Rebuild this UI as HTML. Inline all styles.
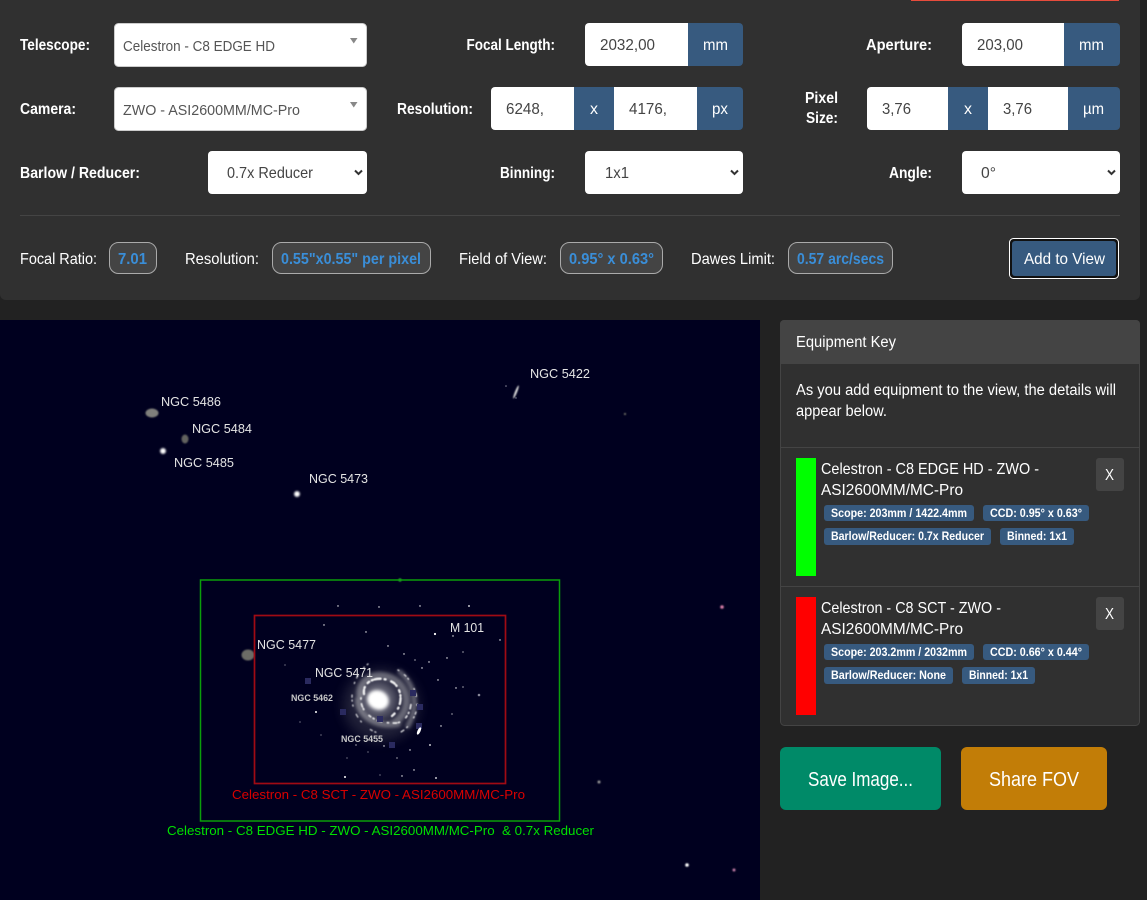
<!DOCTYPE html>
<html><head><meta charset="utf-8"><title>FOV Calculator</title>
<style>
html,body{margin:0;padding:0;background:#222;width:1147px;height:900px;overflow:hidden}
svg{display:block}
text{font-family:"Liberation Sans",Arial,sans-serif;white-space:pre}
.l{font-size:16px;font-weight:bold;fill:#fff}
.n{font-size:15.5px;fill:#fff}
.d{font-size:16px;fill:#555}
.b{font-size:16px;font-weight:bold;fill:#3a8ed8}
.t{font-size:16px;fill:#fff}
.s{font-size:12px;font-weight:bold;fill:#fff}
.g{font-size:13px;fill:#e4e4e4}
</style></head><body>
<svg width="1147" height="900" viewBox="0 0 1147 900" xmlns="http://www.w3.org/2000/svg">
<defs>
<filter id="b1" x="-30%" y="-30%" width="160%" height="160%"><feGaussianBlur stdDeviation="0.3"/></filter>
<filter id="b2" x="-50%" y="-50%" width="200%" height="200%"><feGaussianBlur stdDeviation="1.6"/></filter>
<filter id="b3" x="-50%" y="-50%" width="200%" height="200%"><feGaussianBlur stdDeviation="6"/></filter>
<filter id="b4" x="-50%" y="-50%" width="200%" height="200%"><feGaussianBlur stdDeviation="0.8"/></filter>
<filter id="b5" x="-20%" y="-20%" width="140%" height="140%"><feGaussianBlur stdDeviation="0.5"/></filter>
<radialGradient id="st"><stop offset="0" stop-color="#fff"/><stop offset=".4" stop-color="#fff"/><stop offset="1" stop-color="#fff" stop-opacity="0"/></radialGradient>
</defs>
<rect width="1147" height="900" fill="#222"/>
<!-- top panel -->
<path d="M0 0H1140V294a6 6 0 0 1-6 6H6a6 6 0 0 1-6-6Z" fill="#303030"/>
<rect x="911" y="0" width="208" height="1" fill="#e74c3c"/>
<!-- row 1 -->
<text class="l" x="20" y="50" textLength="70" lengthAdjust="spacingAndGlyphs">Telescope:</text>
<rect x="114.500" y="23.500" width="252" height="43" rx="4" fill="#fff" stroke="#ccc"/>
<text class="d" x="123" y="51" textLength="152" lengthAdjust="spacingAndGlyphs" style="font-size:14.500px">Celestron - C8 EDGE HD</text>
<path d="M350 38h7.500l-3.750 5.500z" fill="#888"/>
<text class="l" x="466.500" y="50" textLength="88.500" lengthAdjust="spacingAndGlyphs">Focal Length:</text>
<path d="M589 23H688V66H589a4 4 0 0 1-4-4V27a4 4 0 0 1 4-4Z" fill="#fff"/>
<path d="M688 23H739a4 4 0 0 1 4 4V62a4 4 0 0 1-4 4H688Z" fill="#375a7f"/>
<text class="d" x="600" y="50" textLength="55" lengthAdjust="spacingAndGlyphs" style="fill:#444">2032,00</text>
<text class="n" x="703" y="50" textLength="25" lengthAdjust="spacingAndGlyphs">mm</text>
<text class="l" x="866" y="50" textLength="66" lengthAdjust="spacingAndGlyphs">Aperture:</text>
<path d="M966 23H1064V66H966a4 4 0 0 1-4-4V27a4 4 0 0 1 4-4Z" fill="#fff"/>
<path d="M1064 23H1116a4 4 0 0 1 4 4V62a4 4 0 0 1-4 4H1064Z" fill="#375a7f"/>
<text class="d" x="977" y="50" textLength="46" lengthAdjust="spacingAndGlyphs" style="fill:#444">203,00</text>
<text class="n" x="1079" y="50" textLength="25" lengthAdjust="spacingAndGlyphs">mm</text>
<!-- row 2 -->
<text class="l" x="20" y="114" textLength="56" lengthAdjust="spacingAndGlyphs">Camera:</text>
<rect x="114.500" y="87.500" width="252" height="43" rx="4" fill="#fff" stroke="#ccc"/>
<text class="d" x="123" y="115" textLength="177" lengthAdjust="spacingAndGlyphs" style="font-size:14.500px">ZWO - ASI2600MM/MC-Pro</text>
<path d="M350 102h7.500l-3.750 5.500z" fill="#888"/>
<text class="l" x="397" y="114" textLength="76" lengthAdjust="spacingAndGlyphs">Resolution:</text>
<path d="M495 87H574V130H495a4 4 0 0 1-4-4V91a4 4 0 0 1 4-4Z" fill="#fff"/>
<rect x="574" y="87" width="40" height="43" fill="#375a7f"/>
<rect x="614" y="87" width="83" height="43" fill="#fff"/>
<path d="M697 87H739a4 4 0 0 1 4 4V126a4 4 0 0 1-4 4H697Z" fill="#375a7f"/>
<text class="d" x="506" y="114" textLength="38" lengthAdjust="spacingAndGlyphs" style="fill:#444">6248,</text>
<text class="n" x="590" y="114" textLength="8" lengthAdjust="spacingAndGlyphs">x</text>
<text class="d" x="629" y="114" textLength="38" lengthAdjust="spacingAndGlyphs" style="fill:#444">4176,</text>
<text class="n" x="712" y="114" textLength="16" lengthAdjust="spacingAndGlyphs">px</text>
<text class="l" x="805" y="103" textLength="33" lengthAdjust="spacingAndGlyphs">Pixel</text>
<text class="l" x="806" y="123" textLength="32" lengthAdjust="spacingAndGlyphs">Size:</text>
<path d="M871 87H948V130H871a4 4 0 0 1-4-4V91a4 4 0 0 1 4-4Z" fill="#fff"/>
<rect x="948" y="87" width="40" height="43" fill="#375a7f"/>
<rect x="988" y="87" width="80" height="43" fill="#fff"/>
<path d="M1068 87H1116a4 4 0 0 1 4 4V126a4 4 0 0 1-4 4H1068Z" fill="#375a7f"/>
<text class="d" x="882" y="114" textLength="29" lengthAdjust="spacingAndGlyphs" style="fill:#444">3,76</text>
<text class="n" x="964" y="114" textLength="8" lengthAdjust="spacingAndGlyphs">x</text>
<text class="d" x="1003" y="114" textLength="29" lengthAdjust="spacingAndGlyphs" style="fill:#444">3,76</text>
<text class="n" x="1083" y="114" textLength="21" lengthAdjust="spacingAndGlyphs">µm</text>
<!-- row 3 -->
<text class="l" x="20" y="178" textLength="120" lengthAdjust="spacingAndGlyphs">Barlow / Reducer:</text>
<rect x="208" y="151" width="159" height="43" rx="4" fill="#fff"/>
<text class="d" x="227" y="178" textLength="86" lengthAdjust="spacingAndGlyphs" style="fill:#444">0.7x Reducer</text>
<path d="M355 170.500l3.500 3.500 3.500-3.500" fill="none" stroke="#333" stroke-width="2"/>
<text class="l" x="500" y="178" textLength="55" lengthAdjust="spacingAndGlyphs">Binning:</text>
<rect x="585" y="151" width="158" height="43" rx="4" fill="#fff"/>
<text class="d" x="605" y="178" textLength="24" lengthAdjust="spacingAndGlyphs" style="fill:#444">1x1</text>
<path d="M731 170.500l3.500 3.500 3.500-3.500" fill="none" stroke="#333" stroke-width="2"/>
<text class="l" x="889" y="178" textLength="43" lengthAdjust="spacingAndGlyphs">Angle:</text>
<rect x="962" y="151" width="158" height="43" rx="4" fill="#fff"/>
<text class="d" x="981" y="178" textLength="15" lengthAdjust="spacingAndGlyphs" style="fill:#444">0°</text>
<path d="M1108 170.500l3.500 3.500 3.500-3.500" fill="none" stroke="#333" stroke-width="2"/>
<rect x="20" y="215" width="1100" height="1" fill="#444"/>
<!-- stats -->
<text class="t" x="20" y="264" textLength="77" lengthAdjust="spacingAndGlyphs">Focal Ratio:</text>
<rect x="109.500" y="242.500" width="47" height="31" rx="9" fill="#444" stroke="#aaa"/>
<text class="b" x="118" y="264" textLength="29" lengthAdjust="spacingAndGlyphs">7.01</text>
<text class="t" x="185" y="264" textLength="74" lengthAdjust="spacingAndGlyphs">Resolution:</text>
<rect x="272.500" y="242.500" width="158" height="31" rx="9" fill="#444" stroke="#aaa"/>
<text class="b" x="281" y="264" textLength="140" lengthAdjust="spacingAndGlyphs">0.55"x0.55" per pixel</text>
<text class="t" x="459" y="264" textLength="88" lengthAdjust="spacingAndGlyphs">Field of View:</text>
<rect x="560.500" y="242.500" width="102" height="31" rx="9" fill="#444" stroke="#aaa"/>
<text class="b" x="569" y="264" textLength="85" lengthAdjust="spacingAndGlyphs">0.95° x 0.63°</text>
<text class="t" x="691" y="264" textLength="84" lengthAdjust="spacingAndGlyphs">Dawes Limit:</text>
<rect x="788.500" y="242.500" width="104" height="31" rx="9" fill="#444" stroke="#aaa"/>
<text class="b" x="797" y="264" textLength="87" lengthAdjust="spacingAndGlyphs">0.57 arc/secs</text>
<rect x="1009.500" y="238.500" width="109" height="40" rx="4" fill="#111" stroke="#fff"/>
<rect x="1012" y="241" width="104" height="35" rx="3" fill="#375a7f"/>
<text class="t" x="1024" y="264" textLength="81" lengthAdjust="spacingAndGlyphs">Add to View</text>
<!-- sky -->
<rect x="0" y="320" width="760" height="580" fill="#00001f"/>
<g fill="#fff">
<g filter="url(#b4)">
<ellipse cx="152" cy="413" rx="6.500" ry="4.500" fill="#80807c"/>
<ellipse cx="185" cy="439" rx="3.500" ry="4.500" fill="#62625e"/>
<ellipse cx="248" cy="655" rx="6.500" ry="5.500" fill="#6c6c66"/>
<ellipse cx="516" cy="392" rx="1.100" ry="7" fill="#ddd" transform="rotate(22 516 392)"/>
<circle cx="163" cy="451" r="4" fill="url(#st)"/>
<circle cx="297" cy="494" r="4" fill="url(#st)"/>
<circle cx="722" cy="607" r="1.800" fill="#d87ea8"/>
<circle cx="687" cy="865" r="1.800"/>
<circle cx="734" cy="870" r="1.500" fill="#c47ea8"/>
<circle cx="599" cy="782" r="1.500" fill="#999"/>
<circle cx="625" cy="414" r="1" fill="#887"/>
<circle cx="400" cy="580" r="1.500" fill="#4c4"/>
</g>
<!-- galaxy -->
<ellipse cx="381" cy="705" rx="38" ry="36" fill="#6a6a72" opacity=".3" filter="url(#b3)"/>
<g fill="none" stroke="#cfcfcf" stroke-linecap="round" filter="url(#b2)" opacity=".4">
<path d="M360 695C358 678 380 668 398 682C412 695 408 716 392 724" stroke-width="7"/>
<path d="M358 700C358 716 376 728 398 724" stroke-width="6"/>
<path d="M400 672C414 684 420 704 408 726" stroke-width="5"/>
</g>
<g fill="none" stroke="#fff" stroke-linecap="round" filter="url(#b5)">
<path d="M364 694C362 680 380 674 394 683C404 692 402 708 392 716" stroke-width="2.400" stroke-dasharray="4 2 1 5 2 3 1 2 6 4 1 6" opacity=".9"/>
<path d="M361 698C360 712 374 724 396 723C406 722 410 712 411 704" stroke-width="1.900" stroke-dasharray="1 5 3 2 1 8 2 3 1 4 4 6" opacity=".8"/>
<path d="M398 670C412 678 420 696 416 712C412 724 404 732 396 734" stroke-width="1.500" stroke-dasharray="1 7 2 3 1 11 1 4 3 8" opacity=".75"/>
<path d="M368 664C358 672 352 684 352 698C352 712 362 728 378 733" stroke-width="1.500" stroke-dasharray="1 4 1 9 3 5 1 12 2 3" opacity=".7"/>
</g>
<ellipse cx="378" cy="700" rx="11" ry="9.500" filter="url(#b2)" transform="rotate(25 378 700)"/>
<circle cx="378" cy="700" r="17" opacity=".4" filter="url(#b3)"/>
<g fill="#2c2c5e" filter="url(#b1)"><rect x="305" y="678" width="6" height="6"/><rect x="340" y="709" width="6" height="6"/><rect x="377" y="716" width="6" height="6"/><rect x="410" y="690" width="6" height="6"/><rect x="417" y="704" width="6" height="6"/><rect x="416" y="723" width="6" height="6"/><rect x="389" y="742" width="6" height="6"/></g>
<ellipse cx="419" cy="731" rx="1.500" ry="4" transform="rotate(25 419 731)"/>
<g filter="url(#b1)">
<circle cx="338" cy="606" r=".7"/><circle cx="379" cy="607" r=".7"/><circle cx="420" cy="606" r=".7"/><circle cx="469" cy="606" r=".9"/>
<circle cx="324" cy="625" r=".7"/><circle cx="366" cy="632" r=".7"/><circle cx="435" cy="634" r="1.100"/><circle cx="453" cy="636" r=".7"/>
<circle cx="388" cy="646" r=".7"/><circle cx="404" cy="654" r=".7"/><circle cx="415" cy="660" r=".6"/><circle cx="429" cy="662" r=".7"/>
<circle cx="447" cy="658" r=".7"/><circle cx="463" cy="652" r=".6"/><circle cx="422" cy="668" r=".7"/><circle cx="438" cy="680" r=".7"/>
<circle cx="456" cy="688" r=".7"/><circle cx="479" cy="695" r="1.300" fill="#889"/><circle cx="316" cy="712" r="1"/><circle cx="345" cy="777" r="1"/>
<circle cx="436" cy="778" r=".9"/><circle cx="402" cy="776" r=".7"/><circle cx="380" cy="775" r=".5"/><circle cx="414" cy="770" r=".7"/>
<circle cx="441" cy="726" r=".7"/><circle cx="452" cy="714" r=".6"/><circle cx="463" cy="687" r=".6"/><circle cx="430" cy="745" r=".9"/>
<circle cx="410" cy="750" r=".7"/><circle cx="397" cy="758" r=".6"/><circle cx="356" cy="745" r=".6"/><circle cx="321" cy="735" r=".5"/>
<circle cx="300" cy="722" r=".5"/><circle cx="285" cy="665" r=".5"/><circle cx="500" cy="640" r=".7"/><circle cx="347" cy="758" r=".5"/>
<circle cx="384" cy="746" r=".7"/><circle cx="368" cy="752" r=".5"/>
<circle cx="516" cy="398" r=".7" fill="#889"/><circle cx="506" cy="386" r=".8" fill="#889"/>
</g>
</g>
<!-- FOV rectangles -->
<rect x="200.500" y="580" width="359" height="241" fill="none" stroke="#0a9e0a" stroke-width="1.500"/>
<rect x="254.500" y="615.500" width="251" height="168" fill="none" stroke="#a00a14" stroke-width="1.700"/>
<text x="232" y="799" textLength="293" lengthAdjust="spacingAndGlyphs" style="font-size:13px;fill:#d80000">Celestron - C8 SCT - ZWO - ASI2600MM/MC-Pro</text>
<text x="167" y="835" textLength="427" lengthAdjust="spacingAndGlyphs" style="font-size:13px;fill:#00e000">Celestron - C8 EDGE HD - ZWO - ASI2600MM/MC-Pro  &amp; 0.7x Reducer</text>
<!-- sky labels -->
<g filter="url(#b1)">
<text class="g" x="530" y="378" textLength="60" lengthAdjust="spacingAndGlyphs">NGC 5422</text>
<text class="g" x="161" y="406" textLength="60" lengthAdjust="spacingAndGlyphs">NGC 5486</text>
<text class="g" x="192" y="433" textLength="60" lengthAdjust="spacingAndGlyphs">NGC 5484</text>
<text class="g" x="174" y="467" textLength="60" lengthAdjust="spacingAndGlyphs">NGC 5485</text>
<text class="g" x="309" y="483" textLength="59" lengthAdjust="spacingAndGlyphs">NGC 5473</text>
<text class="g" x="450" y="632" textLength="34" lengthAdjust="spacingAndGlyphs">M 101</text>
<text class="g" x="257" y="649" textLength="59" lengthAdjust="spacingAndGlyphs">NGC 5477</text>
<text class="g" x="315" y="677" textLength="58" lengthAdjust="spacingAndGlyphs">NGC 5471</text>
<text class="g" x="291" y="701" textLength="42" lengthAdjust="spacingAndGlyphs" style="font-size:9.500px;font-weight:bold;fill:#c8c8c8">NGC 5462</text>
<text class="g" x="341" y="742" textLength="42" lengthAdjust="spacingAndGlyphs" style="font-size:9.500px;font-weight:bold;fill:#c8c8c8">NGC 5455</text>
</g>
<!-- equipment card -->
<rect x="780.500" y="320.500" width="359" height="405" rx="4" fill="#303030" stroke="#444"/>
<path d="M780 364V324a4 4 0 0 1 4-4H1136a4 4 0 0 1 4 4V364Z" fill="#444"/>
<text class="t" x="796" y="347" textLength="100" lengthAdjust="spacingAndGlyphs" style="font-size:15.500px">Equipment Key</text>
<text class="t" x="796" y="395" textLength="320" lengthAdjust="spacingAndGlyphs" style="font-size:15.500px">As you add equipment to the view, the details will</text>
<text class="t" x="796" y="416" textLength="91" lengthAdjust="spacingAndGlyphs" style="font-size:15.500px">appear below.</text>
<rect x="781" y="447" width="358" height="1" fill="#444"/>
<rect x="781" y="586" width="358" height="1" fill="#444"/>
<rect x="796" y="458" width="20" height="118" fill="#0f0"/>
<rect x="796" y="597" width="20" height="118" fill="#f00"/>
<text class="t" x="821" y="474" textLength="218" lengthAdjust="spacingAndGlyphs">Celestron - C8 EDGE HD - ZWO -</text>
<text class="t" x="821" y="495" textLength="142" lengthAdjust="spacingAndGlyphs">ASI2600MM/MC-Pro</text>
<text class="t" x="821" y="613" textLength="180" lengthAdjust="spacingAndGlyphs">Celestron - C8 SCT - ZWO -</text>
<text class="t" x="821" y="634" textLength="142" lengthAdjust="spacingAndGlyphs">ASI2600MM/MC-Pro</text>
<rect x="1096" y="458" width="28" height="33" rx="3" fill="#444"/>
<text class="t" x="1105" y="480" textLength="9" lengthAdjust="spacingAndGlyphs">X</text>
<rect x="1096" y="597" width="28" height="33" rx="3" fill="#444"/>
<text class="t" x="1105" y="619" textLength="9" lengthAdjust="spacingAndGlyphs">X</text>
<g fill="#375a7f">
<rect x="824" y="505" width="150" height="16" rx="3"/><rect x="983" y="505" width="106" height="16" rx="3"/>
<rect x="824" y="528" width="167" height="17" rx="3"/><rect x="1000" y="528" width="74" height="17" rx="3"/>
<rect x="824" y="644" width="150" height="16" rx="3"/><rect x="983" y="644" width="106" height="16" rx="3"/>
<rect x="824" y="667" width="129" height="17" rx="3"/><rect x="962" y="667" width="73" height="17" rx="3"/>
</g>
<text class="s" x="831" y="517" textLength="136" lengthAdjust="spacingAndGlyphs">Scope: 203mm / 1422.4mm</text>
<text class="s" x="990" y="517" textLength="92" lengthAdjust="spacingAndGlyphs">CCD: 0.95° x 0.63°</text>
<text class="s" x="831" y="540" textLength="153" lengthAdjust="spacingAndGlyphs">Barlow/Reducer: 0.7x Reducer</text>
<text class="s" x="1007" y="540" textLength="60" lengthAdjust="spacingAndGlyphs">Binned: 1x1</text>
<text class="s" x="831" y="656" textLength="136" lengthAdjust="spacingAndGlyphs">Scope: 203.2mm / 2032mm</text>
<text class="s" x="990" y="656" textLength="92" lengthAdjust="spacingAndGlyphs">CCD: 0.66° x 0.44°</text>
<text class="s" x="831" y="679" textLength="115" lengthAdjust="spacingAndGlyphs">Barlow/Reducer: None</text>
<text class="s" x="969" y="679" textLength="59" lengthAdjust="spacingAndGlyphs">Binned: 1x1</text>
<!-- action buttons -->
<rect x="780" y="747" width="161" height="63" rx="6" fill="#008a68"/>
<text x="808" y="786" textLength="105" lengthAdjust="spacingAndGlyphs" style="font-size:20px;fill:#fff">Save Image...</text>
<rect x="961" y="747" width="146" height="63" rx="6" fill="#c27d07"/>
<text x="989" y="786" textLength="90" lengthAdjust="spacingAndGlyphs" style="font-size:20px;fill:#fff">Share FOV</text>
</svg>
</body></html>
